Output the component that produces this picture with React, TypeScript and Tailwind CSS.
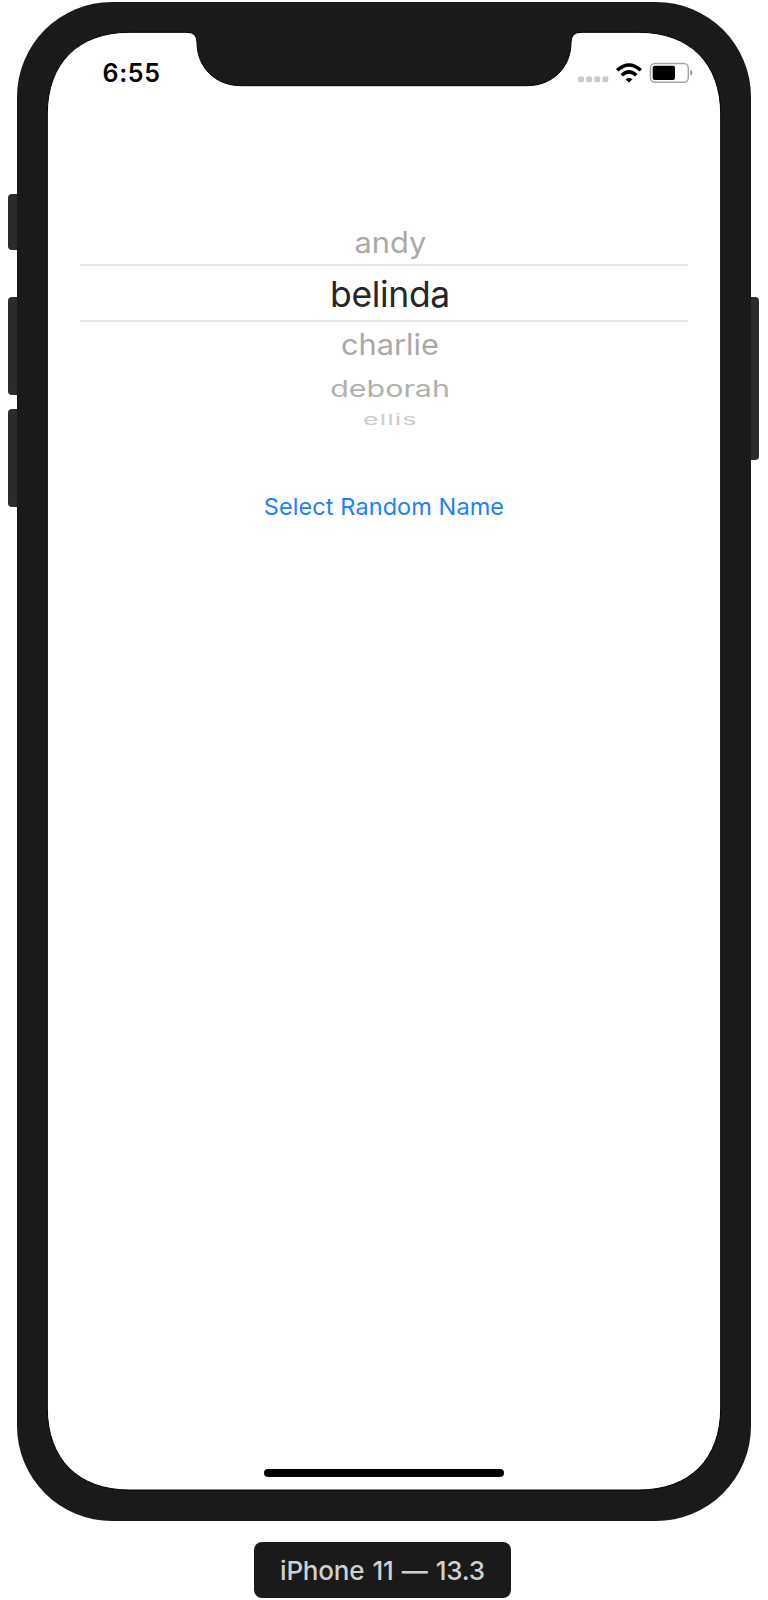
const names = [
  { label: "andy", row: "h-[42px] pt-[2px]", text: "text-[29.5px] leading-[36px] text-[#a9a9a9] scale-x-[1.045]" },
  { label: "belinda", row: "h-[58px] border-y-2 border-[#e6e6e6] pt-[8px]", text: "text-[35.5px] leading-[42px] text-[#262626] tracking-[-0.35px]" },
  { label: "charlie", row: "h-[44px] pt-[4px]", text: "text-[29.5px] leading-[36px] text-[#a9a9a9] scale-x-[1.045]" },
  { label: "deborah", row: "h-[36px] pt-[4px]", text: "text-[29.5px] leading-[36px] text-[#b0b0b0] scale-x-[1.03] scale-y-[0.78]" },
  { label: "ellis", row: "h-[32px] pt-[5px]", text: "text-[22px] leading-[26px] text-[#cccccc] tracking-[0.8px] scale-x-[1.22] scale-y-[0.67]" },
];

function Bezel() {
  return (
    <svg className="absolute inset-0 h-full w-full" viewBox="17 2 734 1519" aria-hidden="true">
      <path
        d="M129 32.3H187Q197 32.3 197 42.5C197 67 215 85.7 241 85.7H527C553 85.7 571 67 571 42.5Q571 32.3 581 32.3H639C689.7 32.3 720.7 63.3 720.7 114V1408C720.7 1459 689.7 1490 639 1490H129C78.3 1490 47.3 1459 47.3 1408V114C47.3 63.3 78.3 32.3 129 32.3Z"
        fill="#fff"
        stroke="#000"
        strokeWidth="1"
      />
    </svg>
  );
}

function SideButtons() {
  return (
    <div className="flex w-[9px] flex-col pt-[192px]">
      <div className="h-[56px] rounded-l-[4px] bg-[#2b2b2b]" />
      <div className="mt-[47px] h-[98px] rounded-l-[4px] bg-[#2b2b2b]" />
      <div className="mt-[14px] h-[98px] rounded-l-[4px] bg-[#2b2b2b]" />
    </div>
  );
}

function StatusBar() {
  return (
    <div className="flex h-[54px] items-start justify-between pl-[55.5px] pr-[27px]">
      <span className="pt-[26px] text-[25px] font-semibold leading-[30px] tracking-[0.7px] text-black">6:55</span>
      <svg className="mt-[26px] h-[30px] w-[120px]" viewBox="574 58 120 30" aria-hidden="true">
        <g fill="#cbcbcb">
          <rect x="578" y="76.3" width="6" height="6" rx="1.8" />
          <rect x="586.2" y="76.3" width="6" height="6" rx="1.8" />
          <rect x="594.3" y="76.3" width="6" height="6" rx="1.8" />
          <rect x="602.4" y="76.3" width="6" height="6" rx="1.8" />
        </g>
        <g fill="none" stroke="#000" strokeWidth="3.5">
          <path d="M617.2 70.3Q629 59.7 640.8 70.3" />
          <path d="M621.7 75.2Q629 68.6 636.3 75.2" />
        </g>
        <path d="M625.6 79.2Q629 76.2 632.4 79.2L629 82.6Z" fill="#000" />
        <rect x="650.5" y="63.4" width="37.8" height="18.8" rx="4.5" fill="#fff" stroke="#a6a6a6" strokeWidth="1.5" />
        <rect x="652.7" y="65.7" width="22.3" height="14.3" rx="2" fill="#000" />
        <path d="M690.2 69.8Q692.4 70.6 692.4 72.8Q692.4 75 690.2 75.8Z" fill="#999" />
      </svg>
    </div>
  );
}

export default function App() {
  return (
    <div className="flex h-[1600px] w-[768px] flex-col items-center overflow-hidden bg-white pt-[2px] font-['Inter',sans-serif]">
      <div className="flex w-full pl-[8px]">
        <SideButtons />
        <div className="relative h-[1519px] w-[734px] rounded-[95px] bg-[#1a1a1a] px-[30px] pt-[30px]">
          <Bezel />
          <div className="relative flex h-[1458px] flex-col">
            <StatusBar />
            <div className="mx-[33px] mt-[136px] flex flex-col">
              {names.map((n) => (
                <div key={n.label} className={`flex items-start justify-center pl-[12px] ${n.row}`}>
                  <span className={`block ${n.text}`}>{n.label}</span>
                </div>
              ))}
            </div>
            <button className="mt-[58px] self-center whitespace-nowrap text-[23.5px] leading-[30px] tracking-[0.08px] text-[#1f80f8]">
              Select Random Name
            </button>
            <div className="mb-[13px] mt-auto h-[8.5px] w-[240px] self-center rounded-full bg-black" />
          </div>
        </div>
        <div className="w-[8px] pt-[295px]">
          <div className="h-[163px] rounded-r-[4px] bg-[#2b2b2b]" />
        </div>
      </div>
      <div className="mr-[3px] mt-[21px] flex h-[56px] w-[257px] shrink-0 items-center justify-center rounded-[8px] bg-[#1a1a1a]">
        <span className="whitespace-nowrap pt-px text-[26px] font-medium leading-[32px] tracking-[-0.2px] text-[#d0d0d0] [word-spacing:1.4px]">iPhone 11 — 13.3</span>
      </div>
    </div>
  );
}
